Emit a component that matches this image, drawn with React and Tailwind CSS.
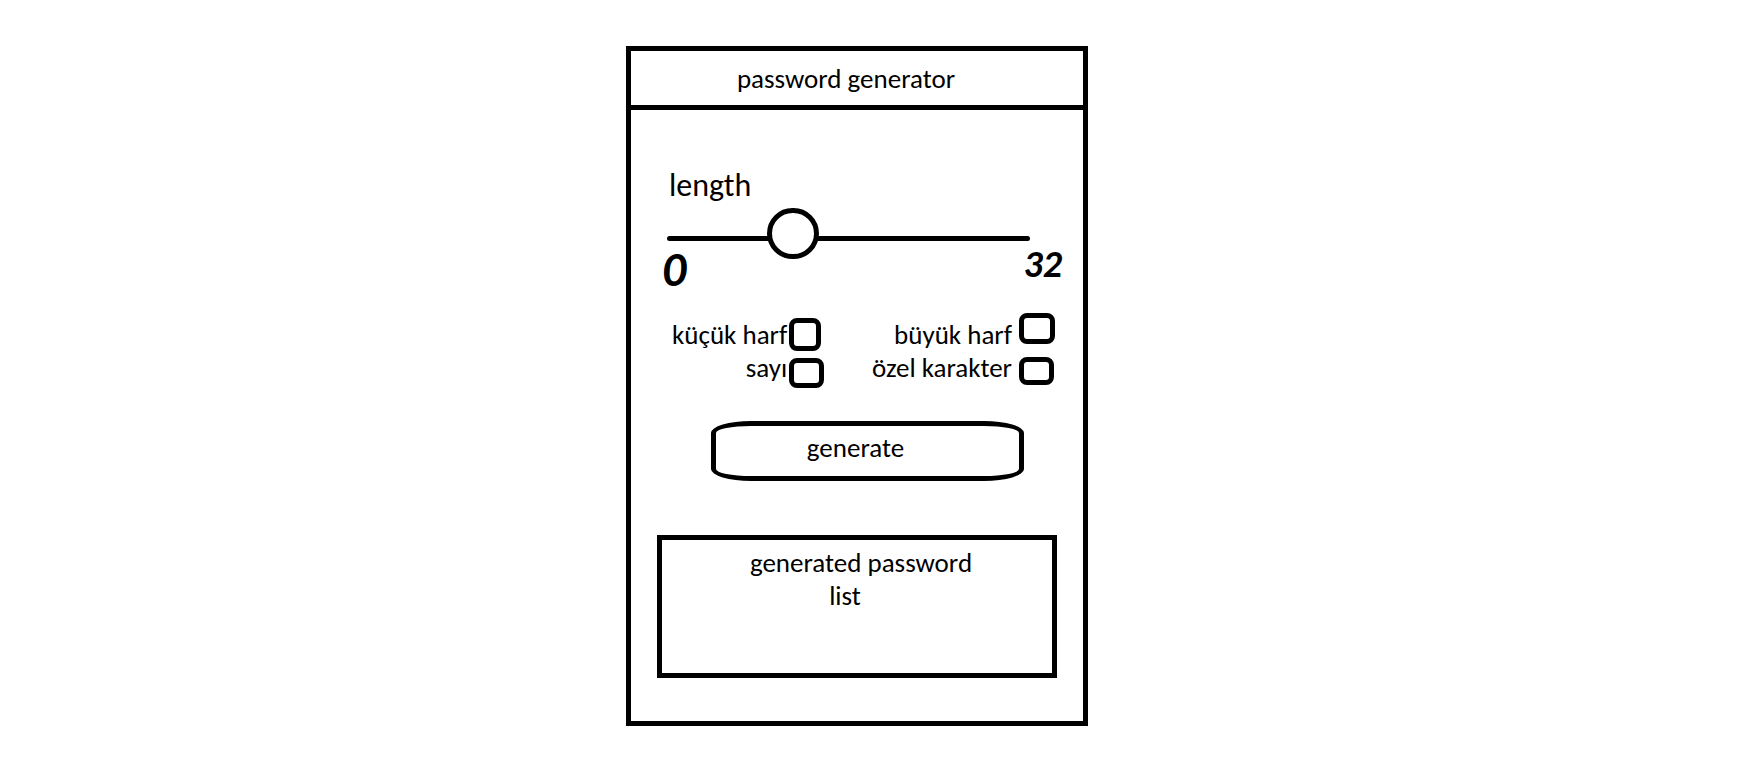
import React from "react";

const box =
  "appearance-none border-5 border-black bg-white rounded-lg checked:bg-black";

export default function App() {
  return (
    <main className="min-h-screen bg-white pt-[46px] pr-[41px] pb-10 font-['Carlito','Lato',sans-serif] text-[27px] leading-[33px] text-black">
      <form
        className="mx-auto w-full max-w-[462px] border-5 border-black"
        onSubmit={(e) => e.preventDefault()}
      >
        <header className="border-b-5 border-black pt-[11px] pb-[9px] pr-[22px] text-center">
          <h1 className="leading-[34px]">password generator</h1>
        </header>

        <div className="px-[26px] pt-[58px] pb-[43px]">
          <div className="pr-[27px] pl-[10px]">
            <label htmlFor="length" className="block pl-[2px] text-[32px] leading-9">
              length
            </label>
            <input
              id="length"
              type="range"
              min="0"
              max="32"
              step="any"
              defaultValue="10.3"
              className="mt-2 block h-[52px] w-full appearance-none bg-transparent [&::-webkit-slider-runnable-track]:h-[5px] [&::-webkit-slider-runnable-track]:rounded-full [&::-webkit-slider-runnable-track]:bg-black [&::-webkit-slider-thumb]:-mt-[28px] [&::-webkit-slider-thumb]:h-[51px] [&::-webkit-slider-thumb]:w-[52px] [&::-webkit-slider-thumb]:appearance-none [&::-webkit-slider-thumb]:rounded-full [&::-webkit-slider-thumb]:border-5 [&::-webkit-slider-thumb]:border-black [&::-webkit-slider-thumb]:bg-white"
            />
          </div>
          <div className="-mx-[5px] -mt-3 flex items-start justify-between pl-[10px] font-bold italic">
            <span className="text-5xl leading-9">0</span>
            <span className="text-[38px] leading-6">32</span>
          </div>

          <div className="mt-[25px] flex justify-between pr-[2px] pl-[15px]">
            <div className="flex gap-[2px] pt-[5px]">
              <div className="flex flex-col text-right">
                <label htmlFor="lower">küçük harf</label>
                <label htmlFor="digits">sayı</label>
              </div>
              <div className="flex flex-col gap-[7px]">
                <input id="lower" type="checkbox" className={`${box} h-[33px] w-8`} />
                <input id="digits" type="checkbox" className={`${box} h-[30px] w-[35px]`} />
              </div>
            </div>
            <div className="flex gap-[7px]">
              <div className="flex flex-col pt-[5px] text-right">
                <label htmlFor="upper">büyük harf</label>
                <label htmlFor="special">özel karakter</label>
              </div>
              <div className="flex flex-col items-start gap-[13px]">
                <input id="upper" type="checkbox" className={`${box} h-[31px] w-9`} />
                <input id="special" type="checkbox" className={`${box} h-7 w-[35px]`} />
              </div>
            </div>
          </div>

          <div className="mt-[33px] pr-[33px] pl-[54px]">
            <button
              type="submit"
              className="block h-[60px] w-full rounded-[40px/12px] border-5 border-black bg-white pr-6 pb-2"
            >
              generate
            </button>
          </div>

          <output className="mt-[54px] flex min-h-[143px] flex-col border-5 border-black pt-[6px] text-center">
            <span className="pl-2">generated password</span>
            <span className="pr-6">list</span>
          </output>
        </div>
      </form>
    </main>
  );
}
